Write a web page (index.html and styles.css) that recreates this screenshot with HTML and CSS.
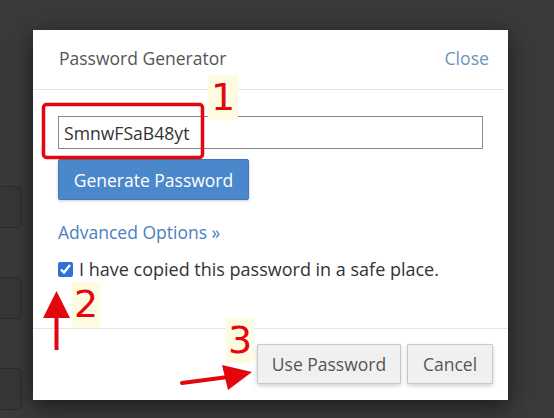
FILE: index.html
```html
<!DOCTYPE html>
<html>
<head>
<meta charset="utf-8">
<link rel="stylesheet" href="styles.css">
</head>
<body>
<div class="page">
  <div class="bg-cards">
    <div class="bg-card"></div>
    <div class="bg-card"></div>
    <div class="bg-card"></div>
  </div>
</div>

<div class="modal">
  <div class="modal-header">
    <span class="modal-title">Password Generator</span>
    <a class="close-link">Close</a>
  </div>
  <div class="modal-body">
    <input class="pw-input" type="text" value="SmnwFSaB48yt">
    <button class="btn btn-primary">Generate Password</button>
    <a class="adv-link">Advanced Options »</a>
    <label class="check-row"><input type="checkbox" checked> I have copied this password in a safe place.</label>
  </div>
  <div class="modal-footer">
    <button class="btn btn-default">Use Password</button>
    <button class="btn btn-default">Cancel</button>
  </div>
</div>

<div class="annot annot-1">1</div>
<div class="annot annot-2">2</div>
<div class="annot annot-3">3</div>
<svg class="marks" width="554" height="418" viewBox="0 0 554 418">
  <rect x="43.5" y="104.5" width="159" height="53" rx="3" fill="none" stroke="#e3060c" stroke-width="3.5"/>
  <line x1="56.5" y1="350" x2="56.5" y2="312" stroke="#e3060c" stroke-width="4"/>
  <polygon points="43,318 70,318 56.5,291" fill="#e3060c"/>
  <line x1="182" y1="383" x2="228" y2="377" stroke="#e3060c" stroke-width="4" stroke-linecap="round"/>
  <polygon points="222,365 252,372 228,390" fill="#e3060c"/>
</svg>
</body>
</html>
```
FILE: styles.css
```css
html, body {
  margin: 0;
  padding: 0;
}
body {
  width: 554px;
  height: 418px;
  overflow: hidden;
  background: #3a3a3a;
  font-family: "Open Sans", "Liberation Sans", sans-serif;
  position: relative;
}
.page {
  height: 418px;
}
.bg-cards {
  display: flex;
  flex-direction: column;
  gap: 49px;
  padding-top: 186px;
  margin-left: -20px;
}
.bg-card {
  width: 40px;
  height: 40px;
  border: 1px solid #2c2c2c;
  border-radius: 5px;
  background: #373737;
}
.modal {
  position: absolute;
  left: 33px;
  top: 30px;
  width: 475px;
  height: 370px;
  background: #fff;
  box-shadow: 0 6px 22px rgba(0,0,0,0.55);
  display: flex;
  flex-direction: column;
}
.modal-header {
  height: 60px;
  box-sizing: border-box;
  border-bottom: 1px solid #e5e5e5;
  display: flex;
  align-items: center;
  justify-content: space-between;
  padding: 0 15px 3px 26px;
  margin-right: 4px;
}
.modal-title {
  font-size: 17.5px;
  color: #555;
}
.close-link {
  font-size: 17.7px;
  color: #6b94c0;
}
.modal-body {
  flex: 1;
  padding: 26px 25px 0 25px;
  display: flex;
  flex-direction: column;
  align-items: flex-start;
}
.pw-input {
  width: 425px;
  height: 33px;
  box-sizing: border-box;
  border: 1px solid #8a8a8a;
  padding: 0 5px;
  font-family: "Open Sans", "Liberation Sans", sans-serif;
  font-size: 17.6px;
  color: #333;
  margin: 0;
}
.btn {
  font-family: "Open Sans", "Liberation Sans", sans-serif;
  cursor: pointer;
  box-sizing: border-box;
  margin: 0;
}
.btn-primary {
  margin-top: 10px;
  width: 191px;
  height: 41px;
  background: #4a87cb;
  border: 1px solid #3f79bb;
  border-radius: 2px;
  color: #fff;
  font-size: 17.5px;
  box-shadow: 0 1px 3px rgba(0,0,0,0.2);
}
.adv-link {
  margin-top: 20px;
  font-size: 17.5px;
  color: #4a80c0;
  line-height: 24px;
}
.check-row {
  margin-top: 14px;
  display: flex;
  align-items: center;
  font-size: 18px;
  color: #333;
  line-height: 22px;
  gap: 6px;
}
.check-row input {
  width: 15px;
  height: 15px;
  margin: 0;
  accent-color: #2e73d9;
}
.modal-footer {
  height: 72px;
  box-sizing: border-box;
  border-top: 1px solid #e5e5e5;
  display: flex;
  justify-content: flex-end;
  align-items: flex-start;
  gap: 6px;
  padding: 15px 15px 0 0;
}
.btn-default {
  height: 40px;
  background: #f0f0f0;
  border: 1px solid #c9c9c9;
  color: #555;
  font-size: 17.5px;
  border-radius: 1px;
  box-shadow: 0 2px 4px rgba(0,0,0,0.18);
}
.btn-default:first-child {
  width: 144px;
}
.btn-default:last-child {
  width: 86px;
}
.annot {
  position: absolute;
  background: #fdfbe0;
  color: #e3060c;
  font-family: "DejaVu Sans", sans-serif;
  font-size: 38px;
  line-height: 44px;
  text-align: center;
}
.annot-1 {
  left: 208px;
  top: 75px;
  width: 30px;
  height: 45px;
}
.annot-2 {
  left: 72px;
  top: 282px;
  width: 28px;
  height: 46px;
}
.annot-3 {
  left: 226px;
  top: 318px;
  width: 28px;
  height: 45px;
}
.marks {
  position: absolute;
  left: 0;
  top: 0;
  pointer-events: none;
}
```
